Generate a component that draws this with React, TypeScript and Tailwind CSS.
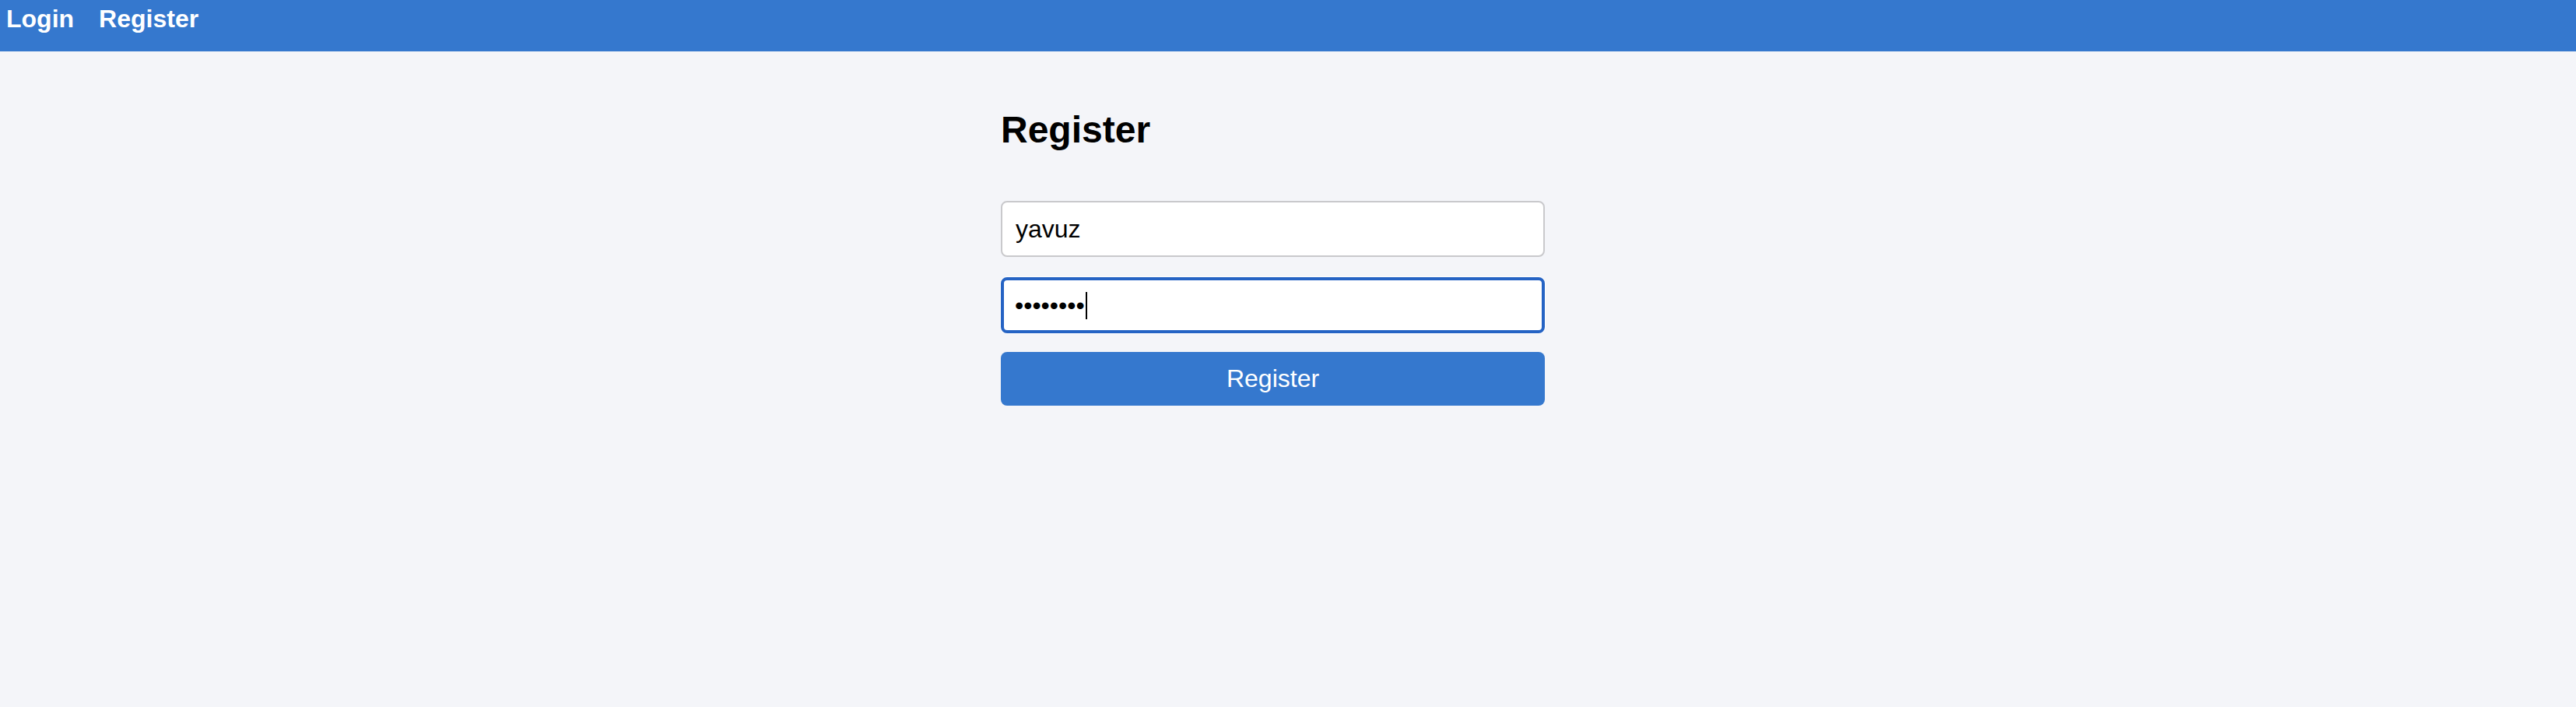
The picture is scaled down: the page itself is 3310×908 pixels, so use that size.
const NavLink = ({ label }: { label: string }) => (
  <a href="#" className="font-bold text-white text-[32px] leading-[36px]">
    {label}
  </a>
);

export default function App() {
  return (
    <div className="min-h-screen bg-[#f4f5f9] font-['Liberation_Sans',Arial,sans-serif] text-black">
      <nav className="flex h-[66px] items-start gap-[32px] bg-[#3578ce] pl-[8px] pt-[6px]">
        <NavLink label="Login" />
        <NavLink label="Register" />
      </nav>

      <main className="mx-auto w-[800px] pl-[31px] pt-[73px]">
        <h2 className="text-[48px] font-bold leading-[56px]">Register</h2>

        <form className="mt-[63px] flex w-[699px] flex-col" onSubmit={(e) => e.preventDefault()}>
          <div className="flex h-[72px] items-center rounded-[8px] border-2 border-[#c9c9cc] bg-white px-[17px] text-[32px] leading-[37px]">
            yavuz
          </div>

          <div className="mt-[26px] flex h-[72px] items-center rounded-[8px] border-4 border-[#2563c4] bg-white px-[14px] text-[32px] leading-[37px] shadow-[0_0_0_1px_#ffffff]">
            <span>••••••••</span>
            <span className="ml-[1px] inline-block h-[35px] w-[2px] bg-black" />
          </div>

          <button
            type="submit"
            className="mt-[24px] h-[69px] w-full rounded-[8px] bg-[#3578ce] text-[32px] leading-[37px] text-white"
          >
            Register
          </button>
        </form>
      </main>
    </div>
  );
}
